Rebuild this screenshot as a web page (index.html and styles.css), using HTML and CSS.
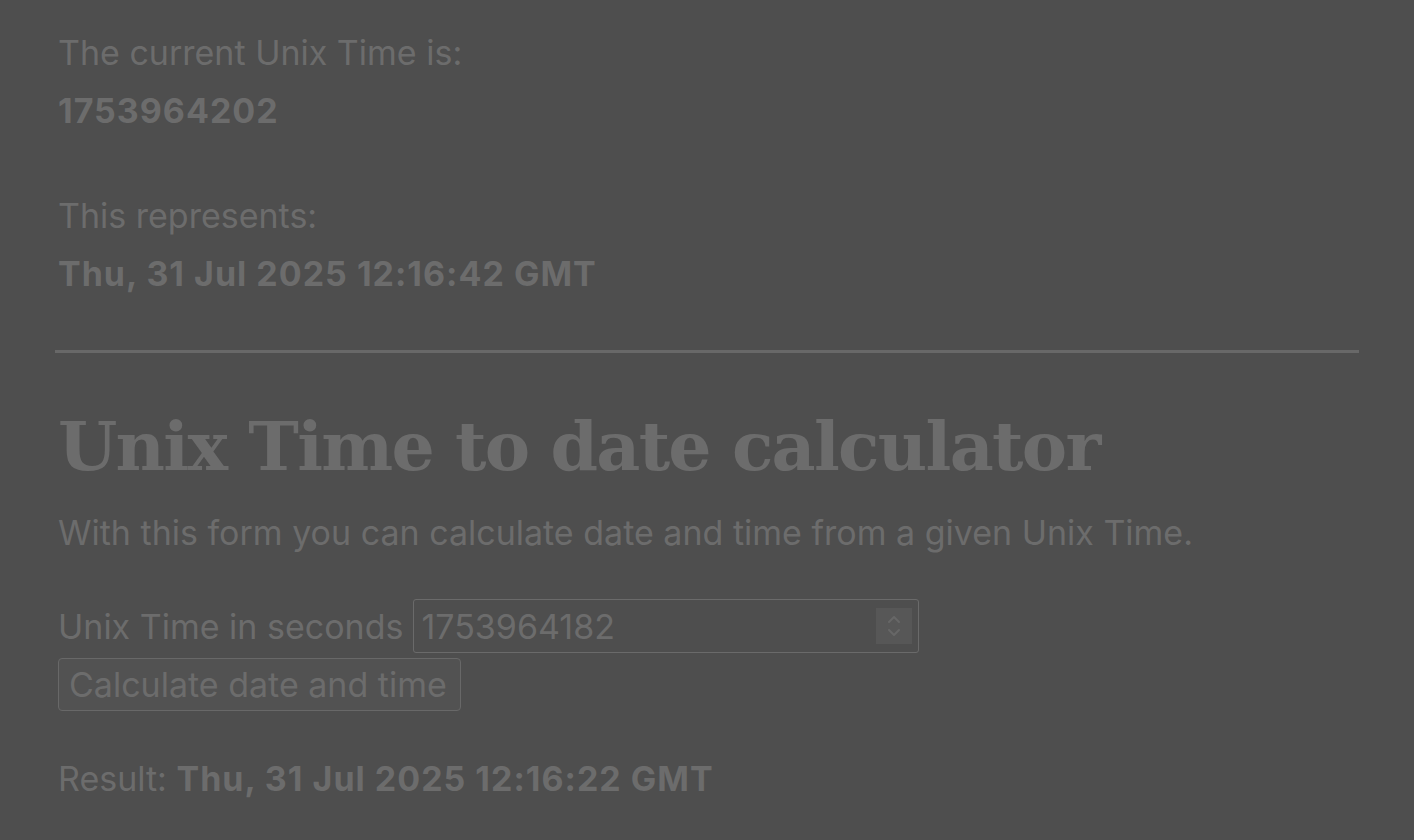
FILE: index.html
```html
<!DOCTYPE html>
<html lang="en">
<head>
<meta charset="utf-8">
<title>Unix Time</title>
<link rel="stylesheet" href="styles.css">
</head>
<body>
<main class="page">
  <section class="now">
    <p class="label">The current Unix Time is:</p>
    <p class="value">1753964202</p>
    <p class="label gap">This represents:</p>
    <p class="value">Thu, 31 Jul 2025 12:16:42 GMT</p>
  </section>
  <hr class="rule">
  <section class="calc">
    <h1 class="title">Unix Time to date calculator</h1>
    <p class="intro">With this form you can calculate date and time from a given Unix Time.</p>
    <form class="form">
      <div class="row">
        <label class="field-label" for="ts">Unix Time in seconds</label>
        <div class="input">
          <span class="input-text">1753964182</span>
          <span class="spinner">
            <svg width="18" height="30" viewBox="0 0 18 30" fill="none" stroke="#676767" stroke-width="2" stroke-linecap="round" stroke-linejoin="round"><path d="M4 11 L9 6 L14 11"/><path d="M4 19 L9 24 L14 19"/></svg>
          </span>
        </div>
      </div>
      <button type="button" class="btn">Calculate date and time</button>
    </form>
    <p class="result">Result: <b>Thu, 31 Jul 2025 12:16:22 GMT</b></p>
  </section>
</main>
</body>
</html>
```

FILE: styles.css
```css
html, body {
  margin: 0;
  padding: 0;
  background: #4e4e4e;
}
body {
  color: #6c6c6c;
  font-family: "Inter", "Liberation Sans", sans-serif;
  font-size: 34px;
}
.page {
  padding: 25px 55px 0 55px;
}
.now p {
  margin: 0;
  padding-left: 3px;
}
.label {
  line-height: 55px;
}
.value {
  font-weight: 700;
  letter-spacing: 1px;
  line-height: 62px;
}
.now .label.gap {
  margin-top: 46px;
}
.rule {
  border: 0;
  height: 3px;
  background: #686868;
  margin: 45px 0 0 0;
}
.calc {
  padding-left: 3px;
}
.title {
  font-family: "DejaVu Serif", "Liberation Serif", serif;
  font-weight: 700;
  font-size: 68px;
  letter-spacing: -1.7px;
  margin: 48px 0 0 0;
  line-height: 90px;
}
.intro {
  margin: 22px 0 0 0;
  line-height: 40px;
}
.form {
  margin-top: 46px;
}
.row {
  display: flex;
  align-items: center;
  gap: 10px;
}
.input {
  width: 506px;
  height: 54px;
  box-sizing: border-box;
  border: 1px solid #6a6a6a;
  border-radius: 3px;
  display: flex;
  align-items: center;
  justify-content: space-between;
  padding: 0 6px 0 7px;
}
.spinner {
  width: 36px;
  height: 36px;
  background: #575757;
  display: flex;
  align-items: center;
  justify-content: center;
}
.btn {
  display: block;
  margin-top: 5px;
  font: inherit;
  color: #6c6c6c;
  background: #525252;
  border: 1px solid #686868;
  border-radius: 4px;
  padding: 0 13px 0 10px;
  height: 53px;
  line-height: 51px;
}
.result {
  margin: 48px 0 0 0;
  line-height: 40px;
}
.result b {
  font-weight: 700;
  letter-spacing: 1px;
}
```
